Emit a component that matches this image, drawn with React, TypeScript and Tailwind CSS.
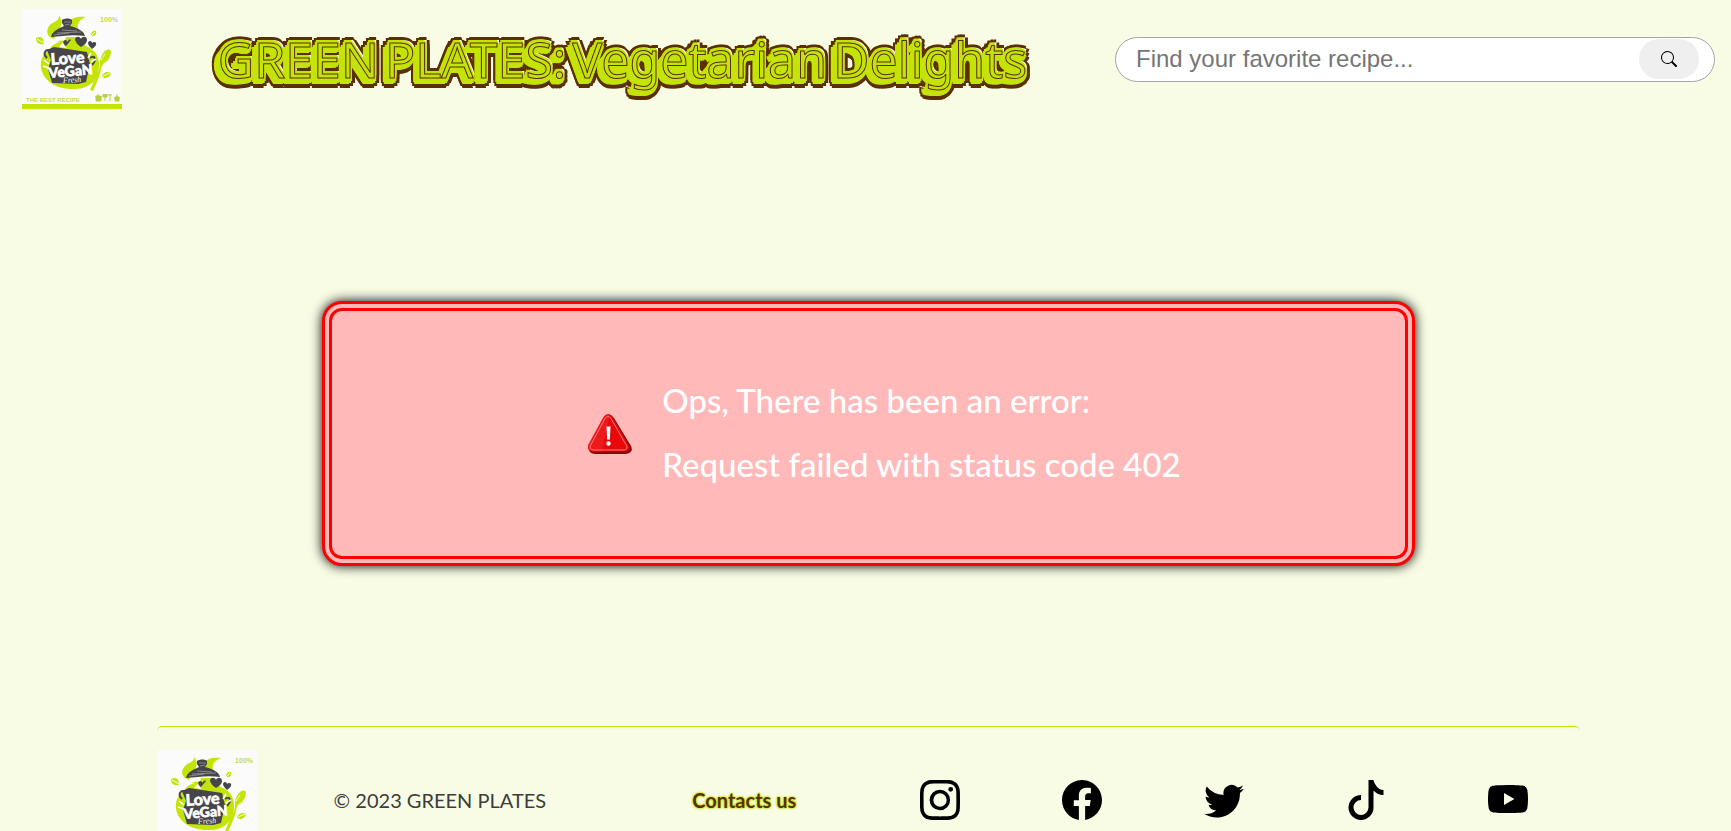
import { BsFacebook, BsInstagram, BsSearch, BsTiktok, BsTwitter, BsYoutube } from "react-icons/bs";

const LIME = "#c4e408";
const INK = "#45454a";

function Logo() {
  return (
    <svg viewBox="0 0 100 100" className="size-[100px] shrink-0" role="img" aria-label="Love Vegan Fresh">
      <rect width="100" height="100" fill="#fcfbfb" />
      <rect y="95" width="100" height="5" fill={LIME} />
      <g fill={LIME}>
        <path d="M37 7c4 5 3 8 1 12l-6 11c-8-2-9-10-3-15 4-3 8-3 8-8Z" />
        <path d="M46 13c5-5 10-6 18-5-8 3-9 7-8 14l-8-4Z" />
        <path d="M27 41c4-7 9-11 16-9l1-4h12c4 4 5 6 8 9 10 4 14 12 13 22-2 14-10 20-23 21-17 1-32-6-35-21-1-8 2-14 8-18Z" />
        <path d="M80 46c3-6 9-7 9-3 0 5-4 10-8 12-2 3-2 8-4 13l-6 14-3-1 7-16c3-5 3-8 3-11 0-2 0-5 2-8Z" />
        <path d="M14 29c6-3 8 1 8 6-5 1-8-1-8-6ZM69 27c0-4 2-6 5-5 1 3-1 6-5 5ZM80 67c1-4 6-5 9-3-1 5-7 7-9 3Z" />
      </g>
      <path d="M25 40c1-5 7-8 13-7-5 1-8 4-13 7ZM43 31c-2 3-1 6 2 8l-8-1Z" fill="#fff" />
      <g stroke="#fff" strokeWidth=".8" fill="none">
        <path d="m15 30 7 4M69 27l4-4M81 67l7-3M79 51l4-6" />
      </g>
      <g fill={INK}>
        <path d="M40 11c3-2 8-2 10 0v3l-2 3c8 2 14 5 15 10-12-2-23 0-34 1 1-5 6-8 13-11l-2-3Z" />
        <path d="m49 31-5 6c-3-2-4-5-1-6 2 0 2 1 3 2 0-2 1-3 3-2ZM53 31c0-4 5-4 6-1 1-3 6-3 6 1 0 3-3 5-6 7-3-2-5-4-6-7ZM66 34c1-3 4-2 4 0 2-2 5-1 4 2-1 2-3 3-4 4-2-2-4-4-4-6Z" />
        <path d="m25 41 7-3 33 5 3 12-4 18-8 2-26-1-4-14 3-9Z" />
      </g>
      <g stroke="#fff" strokeWidth=".6" fill="none" opacity=".6">
        <path d="m35 24 24-1M40 21l15 1M42 13h7M43 16l5-1M32 26l15-2" />
      </g>
      <path d="M25 49c-5-5-1-10 4-7M68 49c5-4 7 2 2 7" stroke={INK} strokeWidth="2" fill="none" />
      <path d="m22 51 5 4M21 57l6 2M66 49l3-5M69 53l5-3" stroke="#fff" strokeWidth="1.600" />
      <g fontFamily="Lato, sans-serif" fontWeight="900" fill="#fff" stroke="#fff" strokeWidth=".6">
        <text x="29" y="56" fontSize="16" transform="rotate(-4 29 56)">Love</text>
        <text x="27" y="69" fontSize="14" transform="rotate(-5 27 69)">VeGaN</text>
      </g>
      <text x="41" y="74" fontSize="8" fontStyle="italic" fontFamily="Liberation Serif, serif" fill="#fff" transform="rotate(-3 41 74)">Fresh</text>
      <g fontFamily="Liberation Sans, sans-serif" fill="#c4dc4c" fontWeight="700">
        <text x="96" y="13" fontSize="7" textAnchor="end">100%</text>
        <text x="4" y="93" fontSize="6">THE BEST RECIPE</text>
      </g>
      <path d="M74 87h5v5h-5ZM73 88h7M76 85v2M83 85v7M81 85v3h4v-3M88 85v7M86 86h4M93 88h4v4h-4ZM95 85v3M92 89h6" stroke="#b9cf3f" fill="#b9cf3f" strokeWidth="1" />
    </svg>
  );
}

function WarningIcon() {
  return (
    <svg viewBox="0 0 44 40" className="h-10 w-11 shrink-0" aria-hidden="true">
      <path d="M18 2q4-4 8 2l17 28q3 7-5 8H8q-6 0-7-4Z" fill="#8b0508" />
      <path d="M15.500 3q4.500-6 9 0l16 28q3 6-4 6.500H5q-7-1-4.500-7Z" fill="#e8090c" />
      <path d="M15.500 3q3-4 6-2L14 37.500H5q-7-1-4.500-7Z" fill="#f03034" opacity=".45" />
      <path d="M17 4.500q3-4 6 0l15.500 27q2 4-3 4.500H6q-5-.5-3.500-4.500Z" fill="none" stroke="#ff8f8f" strokeWidth=".8" />
      <path d="M18.500 12.500h4l-.6 13h-2.800Z" fill="#fff" />
      <circle cx="20.500" cy="29.500" r="2.200" fill="#fff" />
    </svg>
  );
}

const socials = [
  { name: "Instagram", Icon: BsInstagram },
  { name: "Facebook", Icon: BsFacebook },
  { name: "Twitter", Icon: BsTwitter },
  { name: "TikTok", Icon: BsTiktok },
  { name: "YouTube", Icon: BsYoutube },
];

export default function App() {
  return (
    <div className="min-h-screen bg-[#f8fce4] pr-4 pl-[22px] font-['Lato',sans-serif]">
      <header className="flex items-center justify-between py-[9px]">
        <a href="#home">
          <Logo />
        </a>
        <h1 className="flex gap-1.5 pr-1 pl-3 font-['Noto_Sans',sans-serif] text-[50px] leading-[60px] font-normal whitespace-nowrap text-[#c4e408] [-webkit-text-stroke:1px_#5c2f00] [text-shadow:-1px_1px_#c4e408,-2px_2px_#c4e408,-3px_3px_#c4e408,-4px_4px_#c4e408,-5px_5px_#c4e408,-6px_6px_#c4e408,-3px_6px_#c4e408,-1px_6px_#c4e408,1px_5px_#c4e408,2px_3px_#c4e408,-3px_1px_#c4e408,-5px_2px_#c4e408,-7px_4px_#c4e408,-3px_-1px_#c4e408,-2px_-3px_#c4e408,2px_0_#c4e408,0_-3px_#c4e408,1px_-2px_#c4e408,2px_-3px_#ffffff,-8px_8px_#5c2f00,-9px_5px_#5c2f00,-9px_2px_#5c2f00,-7px_-2px_#5c2f00,-4px_-5px_#5c2f00,-1px_-6px_#5c2f00,2px_-6px_#5c2f00,5px_-3px_#5c2f00,5px_1px_#5c2f00,5px_5px_#5c2f00,3px_8px_#5c2f00,0_10px_#5c2f00,-3px_10px_#5c2f00,-6px_10px_#5c2f00]">
          <span>GREEN</span> <span>PLATES:</span> <span>Vegetarian</span> <span>Delights</span>
        </h1>
        <form className="flex h-[45px] w-[600px] items-center rounded-full border border-[#a5a5a5] bg-white pr-[15px] pl-5" onSubmit={(e) => e.preventDefault()}>
          <input
            type="text"
            aria-label="Find your favorite recipe"
            placeholder="Find your favorite recipe..."
            className="min-w-0 flex-1 bg-transparent font-['Liberation_Sans',sans-serif] text-2xl text-black outline-none placeholder:text-[#757575]"
          />
          <button type="submit" aria-label="Search" className="flex h-10 w-[60px] items-center justify-center rounded-[20px] bg-[#efefef] text-base text-black">
            <BsSearch />
          </button>
        </form>
      </header>

      <main className="pt-[183px] pb-40">
        <section role="alert" className="mx-auto flex h-[265px] w-[64.6%] items-center justify-center gap-[30px] rounded-[20px] border-[10px] border-double border-[#ff0000] bg-[#ffb9b9] pl-8 shadow-[0_0_12px_#000000]">
          <WarningIcon />
          <div className="flex flex-col gap-6 pb-1 text-[33px] leading-10 font-medium text-white">
            <p>Ops, There has been an error:</p>
            <p>Request failed with status code 402</p>
          </div>
        </section>
      </main>

      <footer className="mx-auto grid h-[142px] w-[84%] grid-cols-10 items-center rounded-[5px] border-t border-[#c4e408] pt-1">
        <a href="#home">
          <Logo />
        </a>
        <p className="col-span-2 pr-1 text-center text-xl whitespace-nowrap text-[#3c3c3c]">© 2023 GREEN PLATES</p>
        <a href="#contacts" className="col-span-2 pl-9 text-center text-xl font-bold text-[#5c2f00] [text-shadow:0_0_2px_#c4e408,0_0_2px_#c4e408,0_0_3px_#c4e408]">
          Contacts us
        </a>
        {socials.map(({ name, Icon }) => (
          <a key={name} href={`#${name.toLowerCase()}`} aria-label={name} className="flex justify-center text-[40px] text-black">
            <Icon />
          </a>
        ))}
      </footer>
    </div>
  );
}
